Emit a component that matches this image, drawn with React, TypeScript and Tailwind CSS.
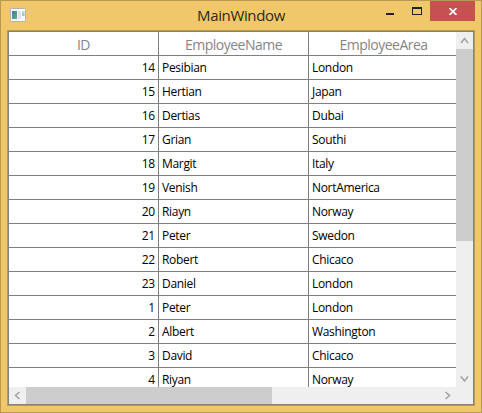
const employees = [
  { id: 14, name: 'Pesibian', area: 'London' },
  { id: 15, name: 'Hertian', area: 'Japan' },
  { id: 16, name: 'Dertias', area: 'Dubai' },
  { id: 17, name: 'Grian', area: 'Southi' },
  { id: 18, name: 'Margit', area: 'Italy' },
  { id: 19, name: 'Venish', area: 'NortAmerica' },
  { id: 20, name: 'Riayn', area: 'Norway' },
  { id: 21, name: 'Peter', area: 'Swedon' },
  { id: 22, name: 'Robert', area: 'Chicaco' },
  { id: 23, name: 'Daniel', area: 'London' },
  { id: 1, name: 'Peter', area: 'London' },
  { id: 2, name: 'Albert', area: 'Washington' },
  { id: 3, name: 'David', area: 'Chicaco' },
  { id: 4, name: 'Riyan', area: 'Norway' },
];

function Arrow({ points }: { points: string }) {
  return (
    <svg className="size-[17px] shrink-0" viewBox="0 0 17 17" fill="none" stroke="#a3a3a3" strokeWidth="1.6">
      <polyline points={points} />
    </svg>
  );
}

function AppIcon() {
  return (
    <svg className="h-[14px] w-4" viewBox="0 0 16 14">
      <defs>
        <linearGradient id="screen" x1="0" y1="0" x2="0.6" y2="1">
          <stop offset="0" stopColor="#4479ab" />
          <stop offset="1" stopColor="#55ac80" />
        </linearGradient>
      </defs>
      <rect x="0.5" y="0.5" width="15" height="13" rx="0.8" fill="#f7f9fa" stroke="#b3b2ae" />
      <rect x="2" y="3" width="5" height="8" fill="url(#screen)" />
      <rect x="8" y="3" width="3" height="8" fill="#e1e3e5" />
      <rect x="12" y="3" width="2.5" height="2" fill="#c3d9e6" />
      <rect x="12" y="5" width="2.5" height="3" fill="#9fcdb5" />
    </svg>
  );
}

function TitleBar() {
  return (
    <header className="relative flex h-[29px] items-start justify-between pl-[9px] pr-[6px]">
      <div className="pt-[7px]">
        <AppIcon />
      </div>
      <h1 className="absolute inset-x-0 top-1 text-center text-[15px] leading-5 tracking-[-0.35px] text-[#2e2818]">
        MainWindow
      </h1>
      <div className="flex h-5">
        <button aria-label="Minimize" className="flex w-[26px] items-start pl-[7px] pt-3">
          <span className="h-[2px] w-2 bg-[#222]" />
        </button>
        <button aria-label="Maximize" className="flex w-[25px] items-start pl-[7px] pt-[6px]">
          <span className="h-2 w-[10px] border border-t-2 border-[#222]" />
        </button>
        <button aria-label="Close" className="flex w-[45px] items-center justify-center bg-[#c75050] pt-px">
          <svg className="h-[7px] w-2" viewBox="0 0 8 7" stroke="#fff" strokeWidth="1.7">
            <path d="M0.5 0L7.5 7M7.5 0L0.5 7" />
          </svg>
        </button>
      </div>
    </header>
  );
}

const columns = 'grid h-6 w-[600px] grid-cols-[150px_150px_300px] grid-rows-[24px]';
const cell = 'h-6 border-b border-r border-[#808080]';

export default function App() {
  return (
    <main className="h-[413px] w-[482px] overflow-hidden border border-[#b8994f] bg-[#f0c869] font-['Open_Sans','Noto_Sans',sans-serif]">
      <TitleBar />
      <section className="mx-[6px] h-[376px] border border-[#b8994f]">
        <div className="flex h-full flex-col border border-[#828282] bg-white">
          <div className="flex h-[355px]">
            <div className="w-[447px] overflow-hidden">
              <div className={`${columns} text-center text-[14px] leading-[26px] tracking-[-0.5px] text-[#858585]`}>
                <div className={cell}>ID</div>
                <div className={cell}>EmployeeName</div>
                <div className="h-6 border-b border-[#808080] pr-[151px]">EmployeeArea</div>
              </div>
              {employees.map((e) => (
                <div key={e.id} className={`${columns} text-[12px] leading-[24px] tracking-[-0.32px] text-black`}>
                  <div className={`${cell} pr-[3px] text-right tracking-[-0.2px]`}>{e.id}</div>
                  <div className={`${cell} pl-[3px]`}>{e.name}</div>
                  <div className={`${cell} pl-[3px]`}>{e.area}</div>
                </div>
              ))}
            </div>
            <div className="flex w-[17px] flex-col bg-[#efefef]">
              <Arrow points="5,11 8.5,6.5 12,11" />
              <div className="h-[192px] bg-[#cdcdcd]" />
              <div className="flex-1" />
              <Arrow points="5,6.5 8.5,11 12,6.5" />
            </div>
          </div>
          <div className="flex h-[17px] bg-[#efefef]">
            <Arrow points="10.5,5 6.5,8.5 10.5,12" />
            <div className="w-[246px] bg-[#cdcdcd]" />
            <div className="flex-1" />
            <div className="mr-[17px] flex">
              <Arrow points="6.5,5 10.5,8.5 6.5,12" />
            </div>
          </div>
        </div>
      </section>
    </main>
  );
}
